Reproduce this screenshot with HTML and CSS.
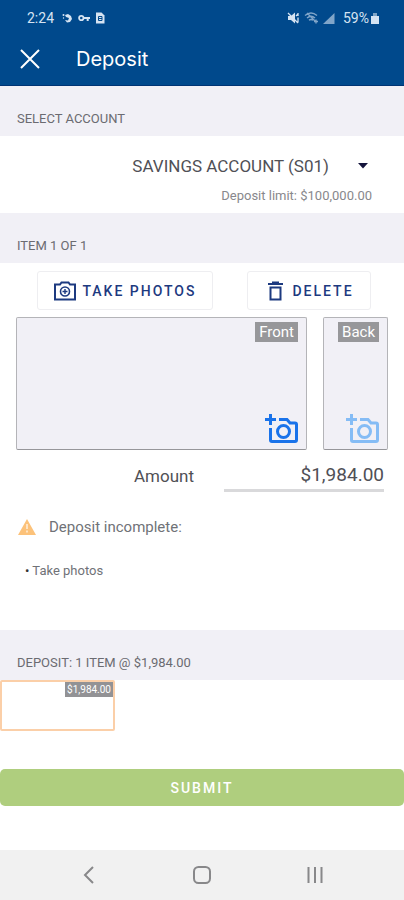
FILE: index.html
```html
<!DOCTYPE html>
<html lang="en">
<head>
<meta charset="utf-8">
<meta name="viewport" content="width=device-width, initial-scale=1">
<title>Deposit</title>
<link rel="stylesheet" href="styles.css">
</head>
<body>
<header class="header">
  <div class="status">
    <span>2:24</span>
    <span class="status-left">
      <svg width="12" height="12" viewBox="0 0 12 12" fill="currentColor"><path d="M4 3l3-1 3 2 1 3-2 3-3 .5L4 8l3 .5L8 6 5 5z"/><circle cx="2.500" cy="3" r="1"/><circle cx="2.500" cy="6" r=".7"/></svg>
      <svg width="12" height="12" viewBox="0 0 12 12"><circle cx="3.300" cy="6" r="2.200" fill="none" stroke="currentColor" stroke-width="1.800"/><path d="M5.500 6H12M9.700 6v3" fill="none" stroke="currentColor" stroke-width="2"/></svg>
      <svg width="10" height="12" viewBox="0 0 10 12"><path d="M1 .5h5.500L9.500 3.500v8H1z" fill="currentColor"/><path d="M3.500 4.500h3.500v4H3.500zM3.500 6.500h3.500" fill="none" stroke="#00498c"/></svg>
    </span>
    <span class="status-right">
      <svg width="13" height="14" viewBox="0 0 13 14"><path d="M1 5h3l4-3.500v11L4 9H1z" fill="currentColor"/><path d="M1 2l10 10M11 2v3M11 6.500v5M9 5l2-2" stroke="currentColor" stroke-width="1.300" fill="none"/></svg>
      <svg class="dim" width="15" height="14" viewBox="0 0 15 14" fill="none" stroke="currentColor" stroke-width="1.400"><path d="M1 4.500q6-5 12 0M3 7q4-3.500 8 0M5 9.300q2-1.600 4 0M3 2l9 9M10 10.500h4M12 8.500v4"/></svg>
      <svg class="dim" width="12" height="12" viewBox="0 0 12 12"><path d="M0 12L11.500 1v11z" fill="currentColor"/></svg>
      <span class="battery">59%<svg width="8" height="12" viewBox="0 0 8 12"><path d="M2 4V1h4v3" fill="#7fa4c6"/><path d="M0 4h8v8H0z" fill="currentColor"/></svg></span>
    </span>
  </div>
  <div class="titlebar">
    <button class="close" type="button" aria-label="Close"><svg width="20" height="20" viewBox="0 0 20 20"><path d="M1 1l18 18M19 1L1 19" stroke="currentColor" stroke-width="2"/></svg></button>
    <h1>Deposit</h1>
  </div>
</header>
<main>
  <h2 class="section"><label for="account">SELECT ACCOUNT</label></h2>
  <div class="account">
    <div class="select-wrap">
      <select id="account"><option>SAVINGS ACCOUNT (S01)</option></select>
      <svg class="caret" width="10" height="6" viewBox="0 0 10 6"><path d="M0 0h10L5 5.500z" fill="#14143c"/></svg>
    </div>
    <p class="limit">Deposit limit: $100,000.00</p>
  </div>
  <h2 class="section">ITEM 1 OF 1</h2>
  <section class="item">
    <div class="actions">
      <button class="action" type="button">
        <svg width="22" height="20" viewBox="0 0 22 20" fill="none" stroke="currentColor"><path d="M1 3.500h5l1.500-2h7l1.500 2h5v15H1z" stroke-width="2"/><circle cx="11" cy="10.500" r="4.500" stroke-width="1.600"/><path d="M11 8v5M8.500 10.500h5" stroke-width="1.400"/></svg>
        TAKE PHOTOS
      </button>
      <button class="action" type="button">
        <svg width="22" height="20" viewBox="0 0 22 20" fill="none" stroke="currentColor" stroke-width="2"><path d="M4 3h15M8 1.500h7M6.500 6.500h10v12h-10z"/></svg>
        DELETE
      </button>
    </div>
    <div class="photos">
      <button class="photo front" type="button">
        <span class="tag">Front</span>
        <svg width="34" height="32" viewBox="0 0 34 32" fill="none" stroke="currentColor" stroke-width="3"><path d="M6.500 1v11M1 6.500h11M15 6.500h8l3 3.500h5q1.500 0 1.500 1.500V27q0 1.500-1.500 1.500H8q-1.500 0-1.500-1.500V15"/><circle cx="19.500" cy="18.500" r="6"/></svg>
      </button>
      <button class="photo back" type="button">
        <span class="tag">Back</span>
        <svg width="34" height="32" viewBox="0 0 34 32" fill="none" stroke="currentColor" stroke-width="3"><path d="M6.500 1v11M1 6.500h11M15 6.500h8l3 3.500h5q1.500 0 1.500 1.500V27q0 1.500-1.500 1.500H8q-1.500 0-1.500-1.500V15"/><circle cx="19.500" cy="18.500" r="6"/></svg>
      </button>
    </div>
    <div class="amount">
      <label for="amount">Amount</label>
      <input id="amount" type="text" inputmode="decimal" value="$1,984.00">
    </div>
    <p class="warning">
      <svg width="18" height="16" viewBox="0 0 18 16"><path d="M9 0l9 16H0z" fill="#fcc27a"/><path d="M9 5v5M9 11.500v2" stroke="#fff0dc" stroke-width="1.500"/></svg>
      Deposit incomplete:
    </p>
    <ul class="todo"><li>Take photos</li></ul>
  </section>
  <h2 class="section">DEPOSIT: 1 ITEM @ $1,984.00</h2>
  <button class="thumb" type="button"><span>$1,984.00</span></button>
  <button class="submit" type="button">SUBMIT</button>
</main>
<nav class="nav">
  <button type="button" aria-label="Back"><svg width="20" height="20" viewBox="0 0 20 20"><path d="M14 2L6 10l8 8"/></svg></button>
  <button type="button" aria-label="Home"><svg width="20" height="20" viewBox="0 0 20 20"><rect x="2" y="2" width="16" height="16" rx="4.500"/></svg></button>
  <button type="button" aria-label="Recent apps"><svg width="20" height="20" viewBox="0 0 20 20"><path d="M3.500 2v16M10 2v16M16.500 2v16"/></svg></button>
</nav>
</body>
</html>
```
FILE: styles.css
```css
* { box-sizing: border-box; }
body {
  margin: 0;
  min-height: 100vh;
  display: flex;
  flex-direction: column;
  background: #fff;
  color: #505056;
  font-family: Roboto, "Liberation Sans", sans-serif;
}
h1, h2, p, ul { margin: 0; padding: 0; }
button, input, select { font: inherit; color: inherit; margin: 0; }
button { cursor: pointer; }
svg { display: block; flex: none; }

.header { background: #00498c; color: #fff; border-bottom: 1px solid #003474; }
.status {
  display: flex;
  align-items: center;
  gap: 7px;
  height: 36px;
  padding: 0 25px 0 27px;
  font-size: 14px;
  color: #d5e3f2;
}
.status-left { display: flex; align-items: center; gap: 5px; }
.status-right { display: flex; align-items: center; gap: 4px; margin-left: auto; }
.battery { display: flex; align-items: center; gap: 2px; margin-left: 4px; }
.dim { opacity: .6; }
.titlebar { display: flex; align-items: center; gap: 36px; height: 49px; padding: 0 20px 4px; }
.titlebar h1 { font: 400 20px/28px Inter, sans-serif; }
.close { padding: 0; border: 0; background: none; }

.section {
  height: 50px;
  padding: 25px 17px 0;
  background: #f1f0f6;
  font-size: 13px;
  line-height: 16px;
  font-weight: 400;
  color: #6b6b71;
}
.account { padding: 16px 32px 9px 16px; }
.select-wrap { display: grid; align-items: center; }
.select-wrap select {
  grid-area: 1 / 1;
  width: 100%;
  height: 28px;
  padding: 0 43px 0 0;
  border: 0;
  appearance: none;
  background: none;
  font-size: 17px;
  text-align: right;
  text-align-last: right;
}
.caret { grid-area: 1 / 1; justify-self: end; margin-right: 4px; pointer-events: none; }
.limit { margin-top: 8px; font-size: 13px; line-height: 16px; text-align: right; color: #88888c; }

.item { padding: 8px 16px 51px; }
.actions { display: flex; justify-content: center; gap: 34px; padding-left: 4px; }
.action {
  display: flex;
  align-items: center;
  gap: 6px;
  height: 39px;
  padding: 0 16px;
  border: 1px solid #eeeef1;
  border-radius: 3px;
  background: #fff;
  color: #1d3a80;
  font-size: 14px;
  font-weight: 500;
  letter-spacing: 2px;
}
.photos { display: grid; grid-template-columns: 291fr 65fr; gap: 16px; margin-top: 7px; }
.photo {
  display: flex;
  flex-direction: column;
  align-items: flex-end;
  justify-content: space-between;
  height: 133px;
  padding: 4px 8px;
  border: 1px solid #b4b4b8;
  border-bottom-color: #96969a;
  border-radius: 2px;
  background: #f1f0f6;
}
.front { color: #1a73ea; }
.back { color: #85bcf5; }
.tag { padding: 0 4px; background: #97979a; color: #fff; font-size: 15px; line-height: 20px; }
.amount { display: flex; justify-content: flex-end; align-items: center; gap: 30px; margin: 10px 4px 0 0; font-size: 17px; }
.amount input {
  width: 160px;
  height: 32px;
  padding: 0;
  border: 0;
  border-bottom: 3px solid #d9d9db;
  background: none;
  text-align: right;
  font-size: 19px;
}
.warning { display: flex; align-items: center; gap: 13px; margin-top: 25px; padding-left: 2px; font-size: 15px; line-height: 20px; color: #707277; }
.todo { margin-top: 26px; padding-left: 9px; list-style: none; font-size: 13px; line-height: 16px; color: #707277; }
.todo li::before { content: "• "; color: #333; }

.thumb {
  display: flex;
  justify-content: flex-end;
  align-items: flex-start;
  width: 115px;
  height: 51px;
  padding: 0;
  border: 2px solid #fbcfa8;
  border-radius: 2px;
  background: #fff;
}
.thumb span { padding: 0 2px; background: #929295; color: #fff; font-size: 10px; line-height: 15px; }
.submit {
  display: block;
  width: 100%;
  height: 37px;
  margin-top: 38px;
  border: 0;
  border-radius: 5px;
  background: #afce7e;
  color: #fff;
  font-size: 14px;
  font-weight: 500;
  letter-spacing: 2px;
}
.nav {
  display: grid;
  grid-template-columns: repeat(3, 113px);
  justify-content: center;
  height: 50px;
  margin-top: auto;
  background: #f1f1f1;
}
.nav button { display: grid; place-items: center; padding: 0; border: 0; background: none; color: #88888a; }
.nav svg { fill: none; stroke: currentColor; stroke-width: 2; }
```
